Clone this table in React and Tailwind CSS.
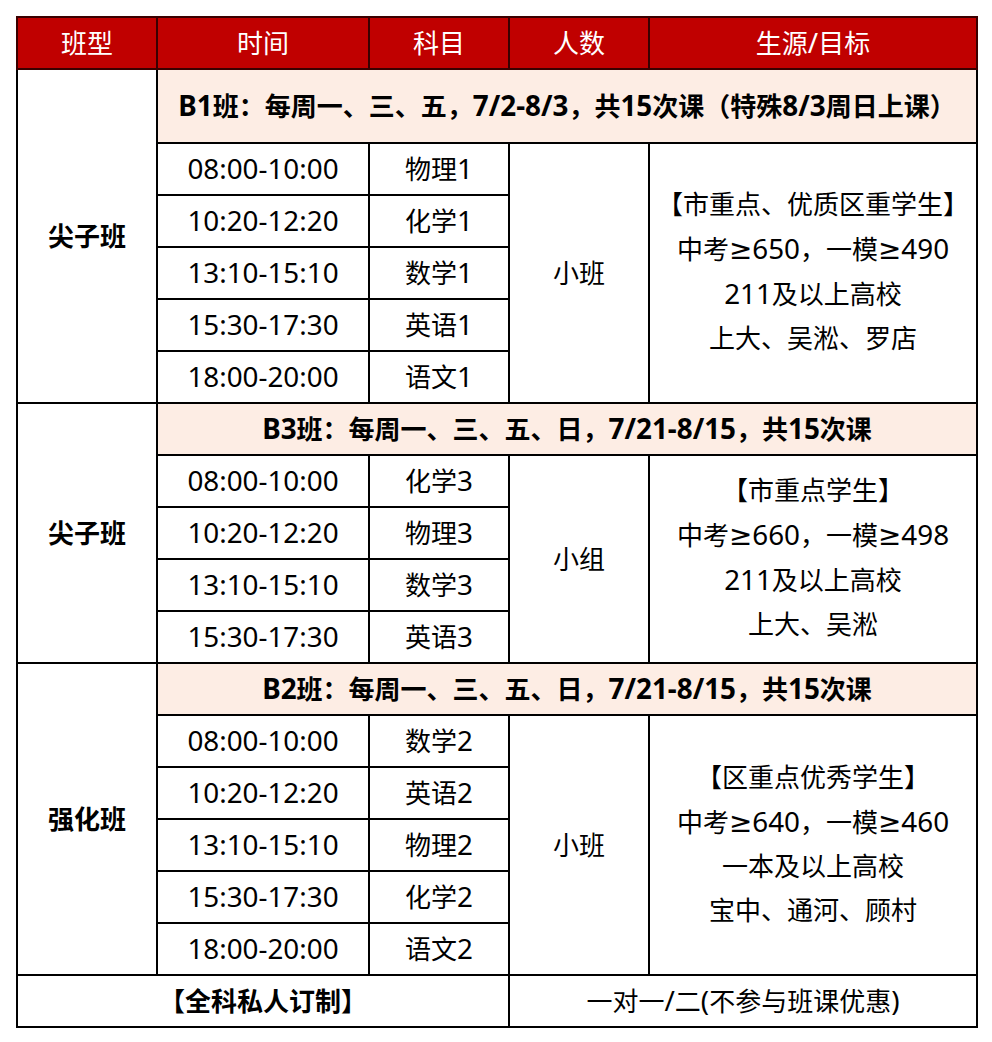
import React from 'react'

const groups = [
    {
        type: '尖子班',
        title: 'B1班：每周一、三、五，7/2-8/3，共15次课（特殊8/3周日上课）',
        titleH: 'h-[74px]',
        size: '小班',
        rows: [
            ['08:00-10:00', '物理1'],
            ['10:20-12:20', '化学1'],
            ['13:10-15:10', '数学1'],
            ['15:30-17:30', '英语1'],
            ['18:00-20:00', '语文1'],
        ],
        target: ['【市重点、优质区重学生】', '中考≥650，一模≥490', '211及以上高校', '上大、吴淞、罗店'],
    },
    {
        type: '尖子班',
        title: 'B3班：每周一、三、五、日，7/21-8/15，共15次课',
        titleH: 'h-[52px]',
        size: '小组',
        rows: [
            ['08:00-10:00', '化学3'],
            ['10:20-12:20', '物理3'],
            ['13:10-15:10', '数学3'],
            ['15:30-17:30', '英语3'],
        ],
        target: ['【市重点学生】', '中考≥660，一模≥498', '211及以上高校', '上大、吴淞'],
    },
    {
        type: '强化班',
        title: 'B2班：每周一、三、五、日，7/21-8/15，共15次课',
        titleH: 'h-[52px]',
        size: '小班',
        rows: [
            ['08:00-10:00', '数学2'],
            ['10:20-12:20', '英语2'],
            ['13:10-15:10', '物理2'],
            ['15:30-17:30', '化学2'],
            ['18:00-20:00', '语文2'],
        ],
        target: ['【区重点优秀学生】', '中考≥640，一模≥460', '一本及以上高校', '宝中、通河、顾村'],
    },
]

const cell = 'border-2 border-black text-center align-middle p-0'

// latin runs render a bit larger, like the YaHei original
function T({ text }) {
    const parts = text.split(/([\x21-\x7e≥]+)/)
    return (
        <>
            {parts.map((p, i) =>
                i % 2 === 1 ? (
                    <span key={i} className="text-[1.07em]">{p}</span>
                ) : (
                    <React.Fragment key={i}>{p}</React.Fragment>
                )
            )}
        </>
    )
}

export default function App() {
    return (
        <div
            className="bg-white min-h-screen pt-[16px] pl-[16px] text-black text-[26px]"
            style={{ fontFamily: '"Noto Sans", "DejaVu Sans", "Noto Sans CJK SC", sans-serif' }}
        >
            <table className="border-collapse table-fixed w-[960px] leading-none">
                <colgroup>
                    <col className="w-[140px]" />
                    <col className="w-[212px]" />
                    <col className="w-[140px]" />
                    <col className="w-[140px]" />
                    <col className="w-[328px]" />
                </colgroup>
                <thead>
                    <tr className="h-[52px] bg-[#c00000] text-white">
                        <th className="border-2 border-[#3a0000] font-normal">班型</th>
                        <th className="border-2 border-[#3a0000] font-normal">时间</th>
                        <th className="border-2 border-[#3a0000] font-normal">科目</th>
                        <th className="border-2 border-[#3a0000] font-normal">人数</th>
                        <th className="border-2 border-[#3a0000] font-normal"><T text="生源/目标" /></th>
                    </tr>
                </thead>
                <tbody>
                    {groups.map((g, gi) => (
                        <React.Fragment key={gi}>
                            <tr className={g.titleH}>
                                <td rowSpan={g.rows.length + 1} className={cell + ' font-bold'}>{g.type}</td>
                                <td colSpan={4} className={cell + ' bg-[#fdede4] font-bold'}><T text={g.title} /></td>
                            </tr>
                            {g.rows.map((r, ri) => (
                                <tr key={ri} className="h-[52px]">
                                    <td className={cell}><T text={r[0]} /></td>
                                    <td className={cell}><T text={r[1]} /></td>
                                    {ri === 0 && (
                                        <>
                                            <td rowSpan={g.rows.length} className={cell}>{g.size}</td>
                                            <td rowSpan={g.rows.length} className={cell}>
                                                <div className="flex flex-col items-center leading-[44px] pb-[4px]">
                                                    {g.target.map((t, ti) => (
                                                        <span key={ti}><T text={t} /></span>
                                                    ))}
                                                </div>
                                            </td>
                                        </>
                                    )}
                                </tr>
                            ))}
                        </React.Fragment>
                    ))}
                    <tr className="h-[52px]">
                        <td colSpan={3} className={cell + ' font-bold'}>【全科私人订制】</td>
                        <td colSpan={2} className={cell}><T text="一对一/二(不参与班课优惠)" /></td>
                    </tr>
                </tbody>
            </table>
        </div>
    )
}
